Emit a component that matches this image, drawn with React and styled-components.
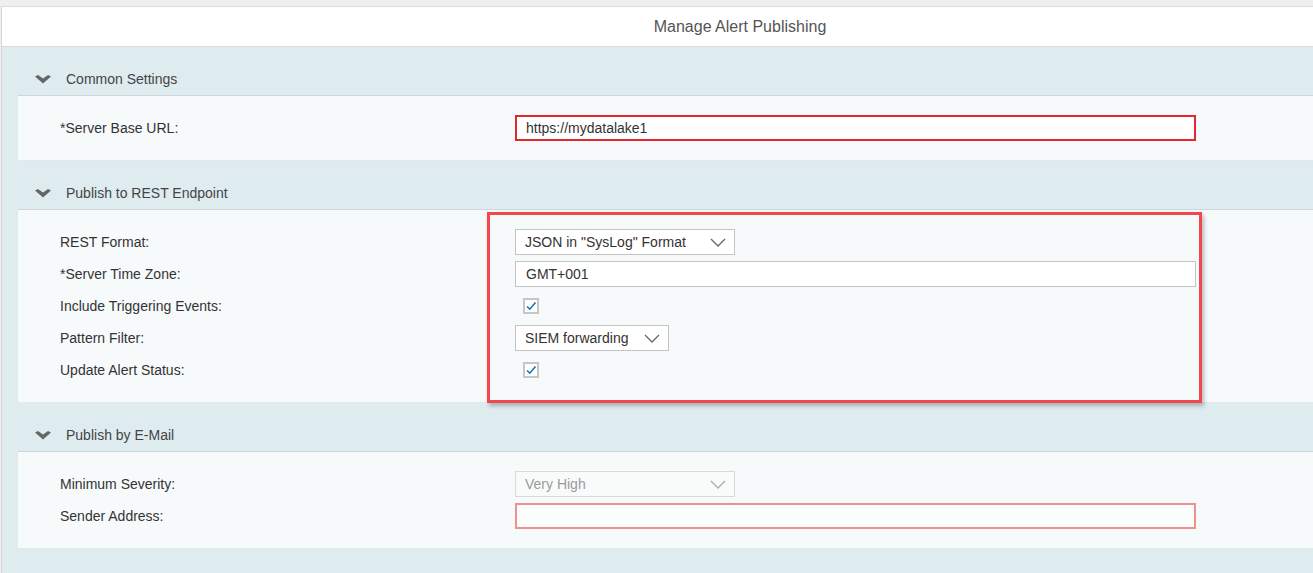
import styled, { createGlobalStyle } from "styled-components";

const Global = createGlobalStyle`
  html, body {
    margin: 0;
    padding: 0;
    background: #efefef;
    overflow: hidden;
    font-family: "Liberation Sans", Arial, sans-serif;
  }
`;

const Frame = styled.div`
  box-sizing: border-box;
  margin: 6px 0 0 1px;
  height: calc(100vh - 6px);
  border-top: 1px solid #dcdcdc;
  border-left: 1px solid #d6d6d6;
  background: #deecf0;
`;

// title is centered on the full (wider) dialog, so it sits right of the viewport middle
const Title = styled.div`
  height: 39px;
  background: #fff;
  border-bottom: 1px solid #dadada;
  display: flex;
  align-items: center;
  justify-content: center;
  padding-left: 165px;
  font-size: 16px;
  color: #555;
`;

const Section = styled.section`
  padding-top: 16px;
  padding-left: 16px;
`;

const Header = styled.div`
  height: 32px;
  display: flex;
  align-items: center;
  padding-left: 17px;
  gap: 15px;
  font-size: 14px;
  color: #444;
`;

const Panel = styled.div`
  position: relative;
  background: #f7fafb;
  border-top: 1px solid #cfd6d9;
  border-bottom: 1px solid #e4e8ea;
  padding: 16px 0 16px 42px;
`;

const Row = styled.div`
  height: 32px;
  display: flex;
  align-items: center;
`;

const Label = styled.div`
  width: 455px;
  font-size: 14px;
  color: #333;
`;

const TextInput = styled.div`
  box-sizing: border-box;
  width: 681px;
  height: 26px;
  display: flex;
  align-items: center;
  padding-left: ${(p) => (p.$error ? 9 : 10)}px;
  font-size: 14px;
  color: #333;
  background: ${(p) => (p.$soft ? "#fbfdfd" : "#fff")};
  border: ${(p) =>
    p.$error ? `2px solid ${p.$soft ? "#ee9090" : "#e5262b"}` : "1px solid #c4c4c4"};
`;

const Select = styled.div`
  box-sizing: border-box;
  width: ${(p) => p.$width}px;
  height: 26px;
  display: flex;
  align-items: center;
  justify-content: space-between;
  padding: 0 8px 0 9px;
  font-size: 14px;
  color: ${(p) => (p.$disabled ? "#9a9a9a" : "#333")};
  background: ${(p) => (p.$disabled ? "#f9fbfb" : "#fff")};
  border: 1px solid ${(p) => (p.$disabled ? "#dadada" : "#c4c4c4")};
`;

const CheckBox = styled.div`
  box-sizing: border-box;
  width: 16px;
  height: 16px;
  margin-left: 8px;
  border: 2px solid #c6c6c6;
  background: #fff;
  display: flex;
  align-items: center;
  justify-content: center;
`;

const Highlight = styled.div`
  position: absolute;
  left: 469px;
  top: 2px;
  width: 715px;
  height: 191px;
  box-sizing: border-box;
  border: 3px solid #f4474b;
  box-shadow: 2px 3px 4px rgba(60, 70, 80, 0.35);
  pointer-events: none;
`;

const HeaderChevron = () => (
  <svg width="16" height="9" viewBox="0 0 16 9">
    <path d="M0 1.5 L3 0 L8 3.6 L13 0 L16 1.5 L8 8.5 Z" fill="#666" />
  </svg>
);

const SelectChevron = ({ color }) => (
  <svg width="16" height="9" viewBox="0 0 16 9">
    <path d="M1 1 L8 8 L15 1" fill="none" stroke={color} strokeWidth="1.3" />
  </svg>
);

const Check = () => (
  <svg width="12" height="12" viewBox="0 0 12 12">
    <path d="M2 6.5 L4.8 9.2 L10.5 2.5" fill="none" stroke="#1b6fc2" strokeWidth="1.6" />
  </svg>
);

const Group = ({ title, children, overlay }) => (
  <Section>
    <Header>
      <HeaderChevron />
      <span>{title}</span>
    </Header>
    <Panel>
      {children}
      {overlay}
    </Panel>
  </Section>
);

export default function App() {
  return (
    <>
      <Global />
      <Frame>
        <Title>Manage Alert Publishing</Title>
        <Group title="Common Settings">
          <Row>
            <Label>*Server Base URL:</Label>
            <TextInput $error>https://mydatalake1</TextInput>
          </Row>
        </Group>
        <Group title="Publish to REST Endpoint" overlay={<Highlight />}>
          <Row>
            <Label>REST Format:</Label>
            <Select $width={220}>
              JSON in "SysLog" Format
              <SelectChevron color="#666" />
            </Select>
          </Row>
          <Row>
            <Label>*Server Time Zone:</Label>
            <TextInput>GMT+001</TextInput>
          </Row>
          <Row>
            <Label>Include Triggering Events:</Label>
            <CheckBox>
              <Check />
            </CheckBox>
          </Row>
          <Row>
            <Label>Pattern Filter:</Label>
            <Select $width={154}>
              SIEM forwarding
              <SelectChevron color="#666" />
            </Select>
          </Row>
          <Row>
            <Label>Update Alert Status:</Label>
            <CheckBox>
              <Check />
            </CheckBox>
          </Row>
        </Group>
        <Group title="Publish by E-Mail">
          <Row>
            <Label>Minimum Severity:</Label>
            <Select $width={220} $disabled>
              Very High
              <SelectChevron color="#aaa" />
            </Select>
          </Row>
          <Row>
            <Label>Sender Address:</Label>
            <TextInput $error $soft />
          </Row>
        </Group>
      </Frame>
    </>
  );
}
